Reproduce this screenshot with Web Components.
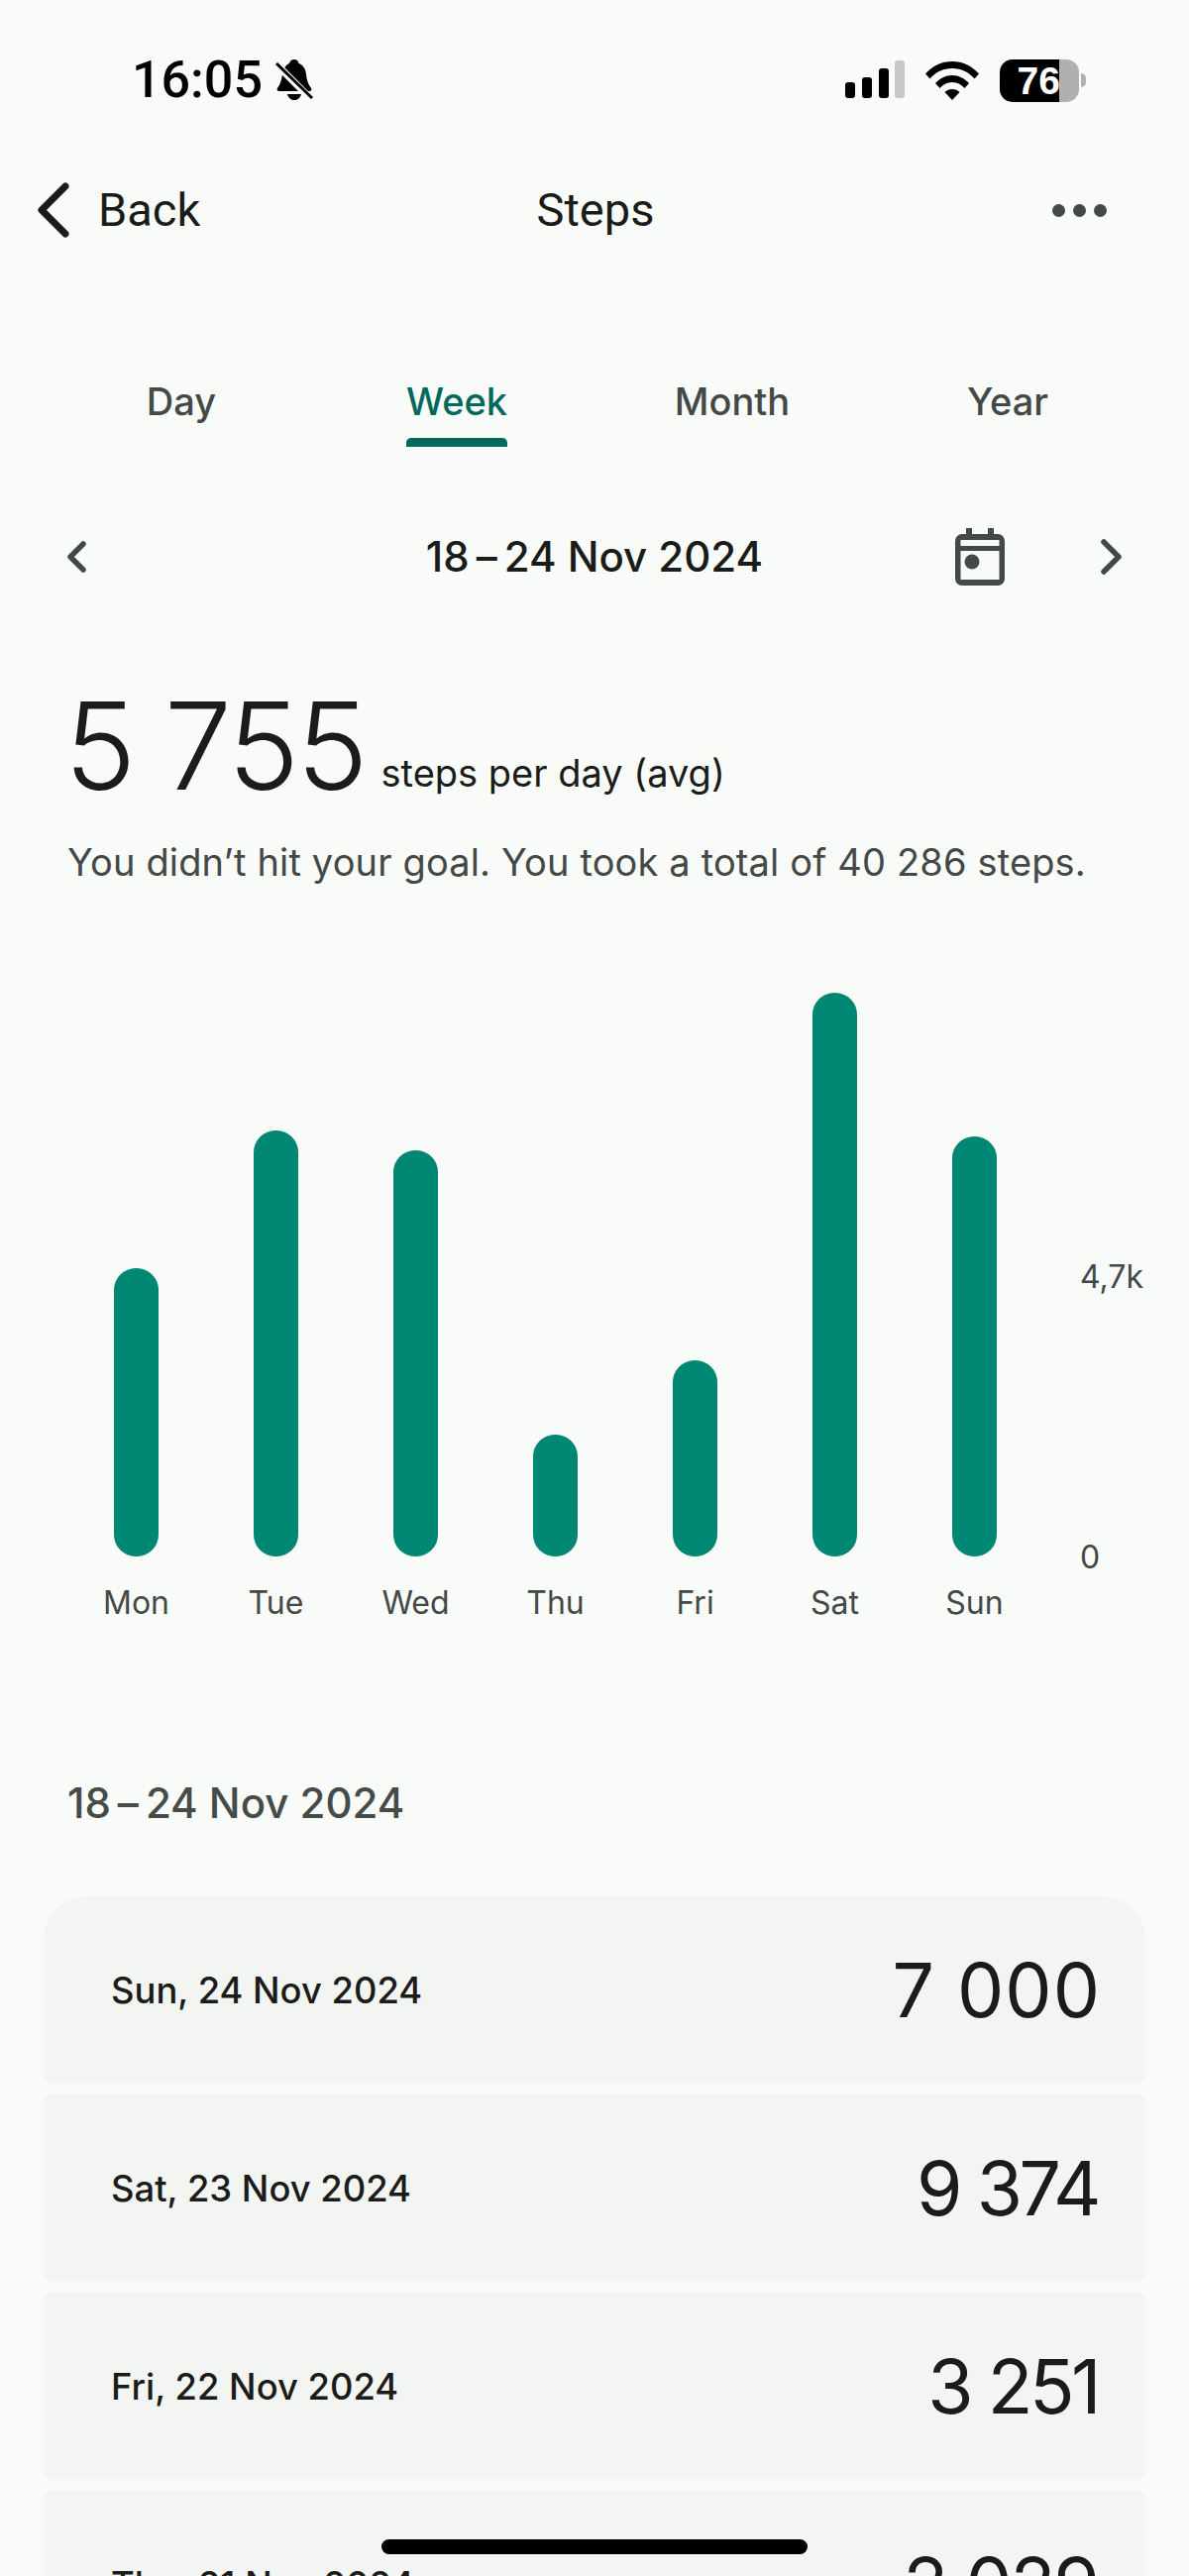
<!DOCTYPE html>
<html>
<head>
<meta charset="utf-8">
<title>Steps</title>
<style>
  html, body { margin: 0; padding: 0; }
  body {
    width: 1200px;
    height: 2600px;
    overflow: hidden;
    position: relative;
    background: #f8fbf8;
    color: #1b1c1a;
    font-family: Inter, Roboto, sans-serif;
  }
</style>
</head>
<body>
  <status-bar time="16:05" battery="76"></status-bar>
  <nav-bar back="Back" title="Steps"></nav-bar>
  <period-tabs items="Day,Week,Month,Year" active="Week"></period-tabs>
  <date-nav label="18 – 24 Nov 2024"></date-nav>
  <step-summary value="5 755" unit="steps per day (avg)">You didn’t hit your goal. You took a total of 40 286 steps.</step-summary>
  <bar-chart>
    <chart-bar label="Mon" top="1279"></chart-bar>
    <chart-bar label="Tue" top="1140"></chart-bar>
    <chart-bar label="Wed" top="1160"></chart-bar>
    <chart-bar label="Thu" top="1447"></chart-bar>
    <chart-bar label="Fri" top="1372"></chart-bar>
    <chart-bar label="Sat" top="1001"></chart-bar>
    <chart-bar label="Sun" top="1146"></chart-bar>
  </bar-chart>
  <day-list heading="18 – 24 Nov 2024">
    <day-row day="Sun, 24 Nov 2024" steps="7 000" tracking="1" first></day-row>
    <day-row day="Sat, 23 Nov 2024" steps="9 374" tracking="-3.5"></day-row>
    <day-row day="Fri, 22 Nov 2024" steps="3 251" tracking="-3.5"></day-row>
    <day-row day="Thu, 21 Nov 2024" steps="2 029" tracking="-2"></day-row>
  </day-list>
  <home-indicator></home-indicator>

<script>
const tightDash = text => text.replace(' – ', '<span style="word-spacing:-0.1em"> – </span>');

class Base extends HTMLElement {
  constructor() {
    super();
    this.attachShadow({ mode: 'open' });
  }
  connectedCallback() {
    this.shadowRoot.innerHTML = `<style>${this.css()}</style>${this.html()}`;
  }
  attr(name, fallback = '') {
    return this.getAttribute(name) || fallback;
  }
}

class StatusBar extends Base {
  css() {
    return `
      :host { display: flex; align-items: center; height: 162px; padding: 0 104px 0 133px; box-sizing: border-box; }
      .time { font: 500 52px/60px Roboto, sans-serif; color: #000; }
      .bell { margin-left: 12px; }
      .right { margin-left: auto; display: flex; align-items: center; }
      .wifi { margin-left: 21px; }
      .battery {
        margin-left: 21px;
        width: 80px; height: 43px; border-radius: 13px;
        background: linear-gradient(to right, #000 0 60px, #b0b0b0 60px);
        color: #fff; font: 700 39px/43px "Liberation Sans", sans-serif;
        display: flex; justify-content: flex-end; padding-right: 19px; box-sizing: border-box;
      }
      .nub { width: 5px; height: 14px; margin-left: 2px; background: #b0b0b0; border-radius: 0 7px 7px 0; }
    `;
  }
  html() {
    return `
      <span class="time">${this.attr('time')}</span>
      <svg class="bell" width="40" height="44" viewBox="0 0 40 44">
        <path d="M20 1c3 0 4 2 4.500 4 5 2 7 6 7.500 11 .5 6 2 10 5 14 1 2 0 3-2 3H5c-2 0-3-1-2-3 3-4 4-8 5-14 .5-5 3-9 7-11 .5-2 2-4 5-4z" fill="#000"/>
        <path d="M13 36h14c-1 4-4 6-7 6s-6-2-7-6z" fill="#000"/>
        <path d="M3 7l33 33" stroke="#f8fbf8" stroke-width="7" fill="none"/>
        <path d="M2 5l36 35" stroke="#000" stroke-width="3" fill="none"/>
      </svg>
      <div class="right">
        <svg width="60" height="40" viewBox="0 0 60 40">
          <rect x="0" y="22" width="10" height="16" rx="3" fill="#000"/>
          <rect x="17" y="17" width="10" height="21" rx="3" fill="#000"/>
          <rect x="34" y="8" width="10" height="30" rx="3" fill="#000"/>
          <rect x="50" y="0" width="10" height="38" rx="3" fill="#c8c8c8"/>
        </svg>
        <svg class="wifi" width="54" height="40" viewBox="0 0 54 40">
          <path d="M0 13.500C7 5.500 16.500 1 27 1s20 4.500 27 12.500l-4.500 5C43.500 11.500 36 8 27 8S10.500 11.500 4.500 18.500z" fill="#000"/>
          <path d="M10 23c4.500-5 10.500-8 17-8s12.500 3 17 8l-4.500 5C36 24 32 22 27 22s-9 2-12.500 6z" fill="#000"/>
          <path d="M19.500 32c2-2 4.500-3 7.500-3s5.500 1 7.500 3L27 40z" fill="#000"/>
        </svg>
        <div class="battery">${this.attr('battery')}</div>
        <div class="nub"></div>
      </div>
    `;
  }
}

class NavBar extends Base {
  css() {
    return `
      :host { display: grid; grid-template-columns: 1fr auto 1fr; align-items: center; height: 100px; box-sizing: border-box; width: 1200px; padding: 0 83px 0 85px; }
      .back { display: flex; align-items: center; gap: 29px; margin-left: -48px; font: 400 47px/60px Roboto, sans-serif; }
      .title { font: 400 47px/60px Roboto, sans-serif; }
      .more { justify-self: end; display: flex; gap: 8px; }
      .more i { width: 13px; height: 13px; border-radius: 50%; background: #444846; }
    `;
  }
  html() {
    return `
      <div class="back">
        <svg width="33" height="56" viewBox="0 0 33 56"><path d="M29 4L5 28l24 24" fill="none" stroke="#1b1c1a" stroke-width="7" stroke-linecap="round" stroke-linejoin="round"/></svg>
        <span>${this.attr('back')}</span>
      </div>
      <div class="title">${this.attr('title')}</div>
      <div class="more"><i></i><i></i><i></i></div>
    `;
  }
}

class PeriodTabs extends Base {
  css() {
    return `
      :host { display: grid; grid-template-columns: repeat(4, 278px); margin: 108px 0 0 44px; height: 81px; }
      .tab { display: flex; flex-direction: column; align-items: center; font: 500 38px/46px Inter, sans-serif; color: #444846; padding-top: 12px; }
      .tab i { display: block; height: 9px; width: 100%; margin-top: 14px; border-radius: 5px 5px 0 0; }
      .tab.on { color: #00695c; }
      .tab.on i { background: #00695c; }
    `;
  }
  html() {
    const active = this.attr('active');
    return this.attr('items').split(',').map(it =>
      `<div class="tab ${it === active ? 'on' : ''}"><div>${it}<i></i></div></div>`
    ).join('');
  }
}

class DateNav extends Base {
  css() {
    return `
      :host { display: grid; grid-template-columns: 1fr auto 1fr; align-items: center; height: 102px; margin-top: 60px; padding: 0 63px 0 63px; }
      .label { font: 500 42px/50px Inter, sans-serif; }
      .right { display: flex; align-items: center; justify-content: flex-end; gap: 96px; }
      svg { display: block; }
    `;
  }
  html() {
    return `
      <svg width="26" height="36" viewBox="0 0 26 36"><path d="M21 5L8 18l13 13" fill="none" stroke="#444846" stroke-width="5.500" stroke-linecap="round" stroke-linejoin="round"/></svg>
      <div class="label">${tightDash(this.attr('label'))}</div>
      <div class="right">
        <svg width="52" height="58" viewBox="0 0 52 58">
          <path d="M12 0h6v6h16V0h6v6h4a7 7 0 0 1 7 7v38a7 7 0 0 1-7 7H8a7 7 0 0 1-7-7V13a7 7 0 0 1 7-7h4z" fill="#444846"/>
          <rect x="6.500" y="12" width="39" height="6" fill="#f8fbf8"/>
          <rect x="6.500" y="23" width="39" height="29" fill="#f8fbf8"/>
          <circle cx="18" cy="34" r="7.500" fill="#444846"/>
        </svg>
        <svg width="26" height="36" viewBox="0 0 26 36"><path d="M3 3l15 15L3 33" fill="none" stroke="#444846" stroke-width="5.500" stroke-linecap="round" stroke-linejoin="round"/></svg>
      </div>
    `;
  }
}

class StepSummary extends Base {
  css() {
    return `
      :host { display: block; padding-left: 68px; margin-top: 75px; }
      .top { display: flex; align-items: flex-end; gap: 16px; margin-left: -3px; }
      .value { font: 350 122px/130px Inter, sans-serif; letter-spacing: -3px; }
      .unit { font: 400 38px/46px Inter, sans-serif; padding-bottom: 15px; }
      .sub { font: 400 38px/46px Inter, sans-serif; letter-spacing: 0.15px; color: #444846; margin-top: 29px; }
    `;
  }
  html() {
    return `
      <div class="top"><span class="value">${this.attr('value')}</span><span class="unit">${this.attr('unit')}</span></div>
      <div class="sub"><slot></slot></div>
    `;
  }
}

class BarChart extends Base {
  css() {
    return `
      :host { display: flex; height: 700px; margin-top: 74px; padding-left: 67px; box-sizing: border-box; }
      .bars { display: flex; }
      .axis { margin-left: 36px; height: 624px; width: 80px; font: 400 32px/38px Inter, sans-serif; color: #444846; display: flex; flex-direction: column; justify-content: flex-end; }
      .axis span:first-child { margin-bottom: 245px; }
    `;
  }
  html() {
    return `
      <div class="bars"><slot></slot></div>
      <div class="axis"><span>4,7k</span><span>0</span></div>
    `;
  }
}

class ChartBar extends Base {
  css() {
    const bottom = 1570;
    const h = bottom - Number(this.attr('top', 1500));
    return `
      :host { display: flex; flex-direction: column; align-items: center; justify-content: flex-end; width: 141px; height: 670px; }
      .bar { width: 45px; height: ${h}px; border-radius: 22px; background: #008774; }
      .label { font: 400 32px/38px Inter, sans-serif; color: #444846; margin-top: 28px; }
    `;
  }
  html() {
    return `<div class="bar"></div><div class="label">${this.attr('label')}</div>`;
  }
}

class DayList extends Base {
  css() {
    return `
      :host { display: block; margin: 128px 44px 0; }
      h2 { font: 500 42px/50px Inter, sans-serif; color: #444b48; margin: 0 0 69px 24px; }
      .list { display: flex; flex-direction: column; gap: 11px; }
    `;
  }
  html() {
    return `<h2>${tightDash(this.attr('heading'))}</h2><div class="list"><slot></slot></div>`;
  }
}

class DayRow extends Base {
  css() {
    const radius = this.hasAttribute('first') ? '44px 44px 8px 8px' : '8px';
    const tracking = Number(this.attr('tracking', '0'));
    return `
      :host { display: flex; align-items: center; justify-content: space-between; height: 189px; padding: 0 45px 0 68px; background: #f3f5f3; border-radius: ${radius}; }
      .day { font: 500 36.4px/46px Inter, sans-serif; }
      .steps { font: 400 75px/90px Inter, sans-serif; letter-spacing: ${tracking}px; margin-right: ${tracking < 0 ? 3 : 0}px; }
    `;
  }
  html() {
    return `<span class="day">${this.attr('day')}</span><span class="steps">${this.attr('steps')}</span>`;
  }
}

class HomeIndicator extends Base {
  css() {
    return `
      :host { display: block; position: absolute; left: 385px; top: 2563px; width: 430px; height: 15px; border-radius: 8px; background: #000; }
    `;
  }
  html() { return ''; }
}

customElements.define('status-bar', StatusBar);
customElements.define('nav-bar', NavBar);
customElements.define('period-tabs', PeriodTabs);
customElements.define('date-nav', DateNav);
customElements.define('step-summary', StepSummary);
customElements.define('bar-chart', BarChart);
customElements.define('chart-bar', ChartBar);
customElements.define('day-list', DayList);
customElements.define('day-row', DayRow);
customElements.define('home-indicator', HomeIndicator);
</script>
</body>
</html>
